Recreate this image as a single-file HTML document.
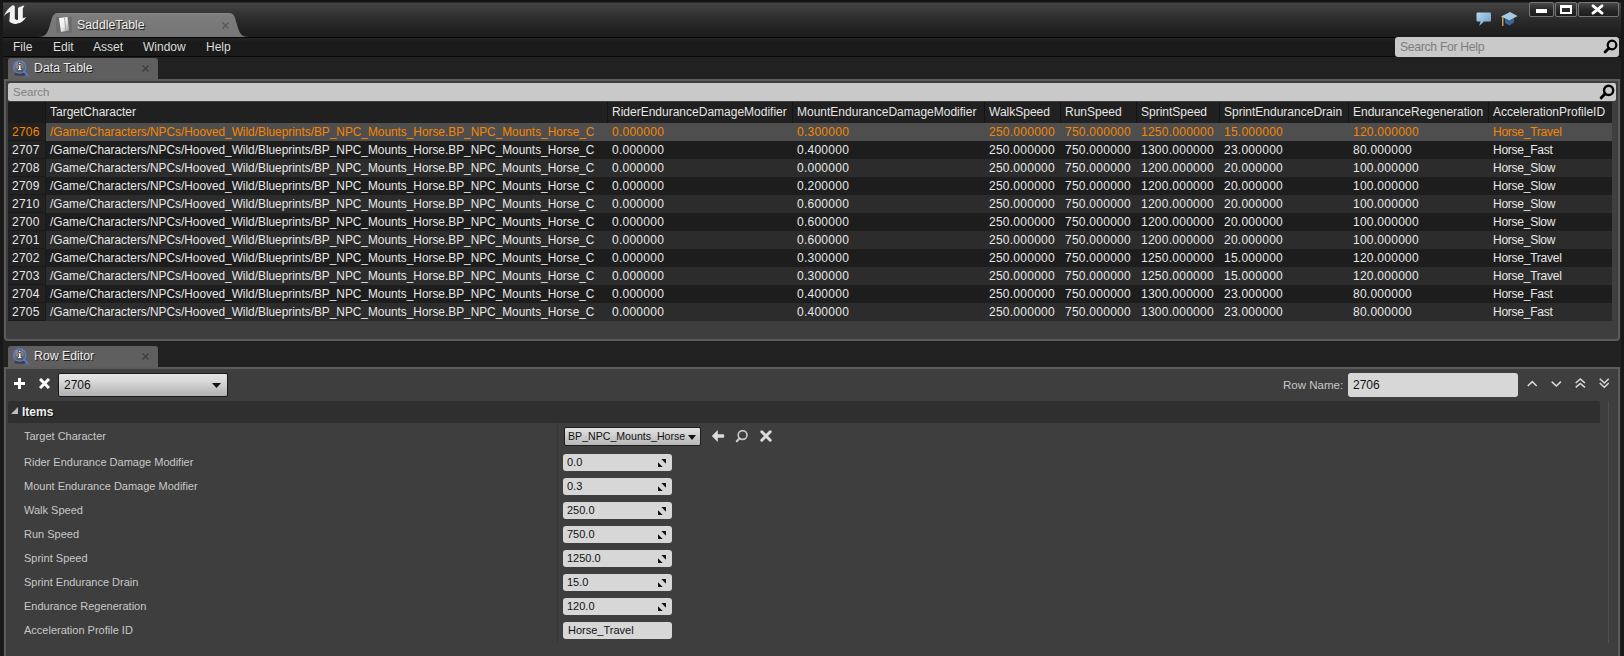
<!DOCTYPE html>
<html><head><meta charset="utf-8"><style>
*{margin:0;padding:0;box-sizing:border-box}
html,body{width:1624px;height:656px;overflow:hidden;background:#212121;font-family:"Liberation Sans",sans-serif;position:relative}
.a{position:absolute}
#title{left:3px;top:0;width:1618px;height:37px;background:linear-gradient(180deg,#131313 0,#131313 2px,#444 3px,#3c3c3c 8px,#303030 16px,#262626 24px,#1f1f1f 32px,#1d1d1d 37px);}
#menubar{left:3px;top:37px;width:1618px;height:20px;background:linear-gradient(#222 1px,#1b1b1b 4px,#1a1a1a);border-top:1px solid #050505;border-bottom:1px solid #080808}
.menu{top:37px;height:20px;line-height:20px;font-size:12px;color:#dcdcdc}
#helpbox{left:1395px;top:37px;width:224px;height:20px;background:#c9c9c9;border-radius:3px;}
#helpbox span{position:absolute;left:5px;top:0;line-height:20px;font-size:12.2px;letter-spacing:-0.3px;color:#7e7e7e}
.hmag{position:absolute;right:1px;top:2px;width:15px;height:15px}
.smag{position:absolute;right:1px;top:1px;width:16px;height:16px}
.tabdock{height:22px;background:#5f5f5f;border-radius:3px 3px 0 0;}
.tabdock span{position:absolute;left:26px;top:0;line-height:21px;font-size:12.3px;color:#ececec;text-shadow:1px 1px 0 #202020}
.tabdock .x{position:absolute;left:133px;top:0;line-height:21px;font-size:11px;color:#3a3a3a}
#dtpanel{left:4px;top:79px;width:1616px;height:262px;background:#3e3e3e;border:2px solid #5c5c5c;border-radius:0 0 4px 4px}
#search{left:8px;top:83px;width:1608px;height:18px;background:#c9c9c9;border-radius:2px}
#search span{position:absolute;left:5px;top:0;line-height:18px;font-size:11.5px;color:#808080}
#thead{left:8px;top:102px;width:1604px;height:21px;background:#202020}
.rnh{left:8px;top:102px;width:38px;height:21px;background:#1c1c1c}
.hsep{top:102px;width:1px;height:21px;background:#141414}
.htxt{top:102px;height:20px;line-height:20px;font-size:12px;color:#e6e6e6;white-space:nowrap}
.rowbg{left:46px;width:1566px;height:18px}
.rowbg.sel{background:#4e4e4e}
.rowbg.odd{background:#1d1d1d}
.rowbg.even{background:#2c2c2c}
.rn{left:8px;width:38px;height:18px;background:#222;border-bottom:1px solid #1a1a1a;border-right:1px solid #1a1a1a}
.rtxt{height:18px;line-height:18px;font-size:12px;white-space:nowrap}
.rtxt.w{color:#e8e8e8}
.rtxt.o{color:#f78500}
#tscroll{left:1612px;top:102px;width:4px;height:219px;background:#3f3f3f}
#rowed{left:4px;top:367px;width:1616px;height:300px;background:#3e3e3e;border:2px solid #5c5c5c;border-radius:0}
.plabel{left:24px;height:16px;line-height:16px;font-size:11px;color:#c8c8c8;white-space:nowrap}
.numbox{left:563px;width:109px;height:17px;background:#d7d7d7;border-radius:3px}
.numbox span{position:absolute;left:4px;top:0;line-height:17px;font-size:11px;color:#111}
.spin{position:absolute;left:95px;top:5px;width:8px;height:8px}
#propsep{left:557px;top:423px;width:1px;height:220px;background:#363636}
#pscroll{left:1608px;top:401px;width:1px;height:242px;background:#4f4f4f}
#itemshdr{left:8px;top:401px;width:1592px;height:22px;background:#2f2f2f;border-radius:3px 3px 0 0}
.path{font-size:11.85px}
.num{letter-spacing:0.25px}
.nm{letter-spacing:-0.25px}
#lborder{left:0;top:0;width:3px;height:656px;background:#181818}
#rborder{left:1621px;top:0;width:3px;height:656px;background:#181818}

</style></head><body>
<div id="title" class="a"></div>
<div class="a" style="left:38px;top:13px;width:211px;height:24px">
<svg width="211" height="24" viewBox="0 0 211 24" style="position:absolute;left:0;top:0"><defs><linearGradient id="tg" x1="0" y1="0" x2="0" y2="1"><stop offset="0" stop-color="#868686"/><stop offset="0.1" stop-color="#7c7c7c"/><stop offset="1" stop-color="#767676"/></linearGradient></defs><path d="M0 24 C7 24 9 21 11 15 L14 5 C15 1.5 17 0 20 0 L191 0 C194 0 196 1.5 197 5 L200 15 C202 21 204 24 211 24 Z" fill="url(#tg)"/></svg>
<div class="a" style="left:18px;top:4px;width:16px;height:16px;background:#6c6c6c"></div>
<svg class="a" style="left:18px;top:4px" width="16" height="16" viewBox="0 0 16 16"><defs><linearGradient id="pg" x1="0" y1="0" x2="1" y2="1"><stop offset="0" stop-color="#fff"/><stop offset="0.5" stop-color="#eee"/><stop offset="1" stop-color="#999"/></linearGradient></defs><path d="M3 1L11.5 0L13 13.5L5 15Z" fill="url(#pg)"/><path d="M8.5 0.4L10 14" stroke="#aaa" stroke-width="1"/></svg>
<div class="a" style="left:39px;top:0;line-height:24px;font-size:12.3px;color:#eee;text-shadow:1px 1px 1px #111">SaddleTable</div>
<svg class="a" style="left:184px;top:9px" width="7" height="7" viewBox="0 0 7 7"><path d="M0.5 0.5L6.5 6.5M6.5 0.5L0.5 6.5" stroke="#555" stroke-width="1.1"/></svg>
</div>
<svg class="a" style="left:0;top:0" width="30" height="28" viewBox="0 0 30 28"><path d="M3.7 16.3 C6 11 9 7 13.2 4.9 L14.8 6.5 L14.8 18.5 C15.5 20 17 20.2 18 19.5 L18 8 C20 6.5 22 5.8 24.4 5.4 L22.8 8.5 L22.8 18 C24 18 25 17.6 26.3 17.1 C24.5 20 22 22.5 19.5 23 C18 23.3 16.5 24 15.2 24 C13 23.8 11 22.8 9.3 21.5 L10 12 C8 12.5 5.5 14 3.7 16.3 Z" fill="#f2f2f2"/></svg>
<div class="a" style="left:1529px;top:2px;width:25px;height:15px;border:1px solid #777;border-radius:2px;background:linear-gradient(#484848,#2a2a2a 50%,#1c1c1c)"></div>
<div class="a" style="left:1555px;top:2px;width:22px;height:15px;border:1px solid #777;border-radius:2px;background:linear-gradient(#484848,#2a2a2a 50%,#1c1c1c)"></div>
<div class="a" style="left:1578px;top:2px;width:41px;height:15px;border:1px solid #777;border-radius:2px;background:linear-gradient(#484848,#2a2a2a 50%,#1c1c1c)"></div>
<div class="a" style="left:1536px;top:9px;width:11px;height:4px;background:#fff"></div>
<div class="a" style="left:1560px;top:5px;width:12px;height:9px;border:2px solid #fff;border-top-width:3px"></div>
<svg class="a" style="left:1591px;top:4px" width="13" height="11" viewBox="0 0 13 11"><path d="M2 1.8L11 9.2M11 1.8L2 9.2" stroke="#fff" stroke-width="2.8" stroke-linecap="round"/></svg>
<svg class="a" style="left:1476px;top:12px" width="16" height="15" viewBox="0 0 16 15"><defs><linearGradient id="cb" x1="0" y1="0" x2="1" y2="1"><stop offset="0" stop-color="#b8d8f0"/><stop offset="1" stop-color="#6a9cc8"/></linearGradient></defs><path d="M2 0.5H13.5C14.5 0.5 15 1.2 15 2.2V8C15 9 14.5 9.5 13.5 9.5H8L3.2 14L4.5 9.5H2C1 9.5 0.5 9 0.5 8V2C0.5 1 1 0.5 2 0.5Z" fill="url(#cb)"/></svg>
<svg class="a" style="left:1501px;top:12px" width="17" height="15" viewBox="0 0 17 15"><path d="M4 6.5V11L8.5 13.5L13 10.5V6.5L8.5 8.5Z" fill="#3a6694"/><path d="M0 4.5L9 0L16.5 4L8.5 8.5Z" fill="#a8c8e8"/><path d="M1.8 5V14" stroke="#e8b860" stroke-width="1.2"/></svg>

<div id="menubar" class="a"></div>
<div class="a menu" style="left:13px">File</div>
<div class="a menu" style="left:53px">Edit</div>
<div class="a menu" style="left:93px">Asset</div>
<div class="a menu" style="left:143px">Window</div>
<div class="a menu" style="left:206px">Help</div>
<div id="helpbox" class="a"><span>Search For Help</span><svg class="hmag" viewBox="0 0 16 16"><circle cx="9.6" cy="6.4" r="4.6" fill="none" stroke="#000" stroke-width="2.4"/><path d="M6.2 9.8 L2.2 13.8" stroke="#000" stroke-width="3" stroke-linecap="round"/></svg>
</div>
<div class="a tabdock" style="left:8px;top:58px;width:150px"><svg class="a" style="left:4px;top:1px" width="20" height="20" viewBox="0 0 20 20"><defs><radialGradient id="ig" cx="0.45" cy="0.35" r="0.65"><stop offset="0" stop-color="#a8a8a8"/><stop offset="1" stop-color="#4a4a4a"/></radialGradient></defs><ellipse cx="8" cy="15.2" rx="5.5" ry="1.6" fill="#222" opacity="0.55"/><circle cx="7.7" cy="8" r="6.1" fill="url(#ig)" stroke="#5a80e0" stroke-width="1.2"/><path d="M11.8 12.3L16 16.6" stroke="#4f78dc" stroke-width="1.9" stroke-linecap="round"/><path d="M6.5 3.4H8.9V5.4H6.5Z M5.8 6H8.9V9.8H9.8V11.5H5.6V9.8H6.5V7.2H5.8Z" fill="#f6f6f6" stroke="#111" stroke-width="0.5"/></svg><span>Data Table</span><svg class="a" style="left:134px;top:7px" width="7" height="7" viewBox="0 0 7 7"><path d="M0.5 0.5L6.5 6.5M6.5 0.5L0.5 6.5" stroke="#3c3c3c" stroke-width="1.1"/></svg></div>

<div id="dtpanel" class="a"></div>
<div id="search" class="a"><span>Search</span><svg class="smag" viewBox="0 0 16 16"><circle cx="9.6" cy="6.4" r="4.6" fill="none" stroke="#000" stroke-width="2.4"/><path d="M6.2 9.8 L2.2 13.8" stroke="#000" stroke-width="3" stroke-linecap="round"/></svg>
</div>
<div class="a" id="thead"></div>
<div class="a rnh"></div>
<div class="a hsep" style="left:45px"></div>
<div class="a htxt" style="left:50px">TargetCharacter</div>
<div class="a hsep" style="left:607px"></div>
<div class="a htxt" style="left:612px">RiderEnduranceDamageModifier</div>
<div class="a hsep" style="left:792px"></div>
<div class="a htxt" style="left:797px">MountEnduranceDamageModifier</div>
<div class="a hsep" style="left:984px"></div>
<div class="a htxt" style="left:989px">WalkSpeed</div>
<div class="a hsep" style="left:1060px"></div>
<div class="a htxt" style="left:1065px">RunSpeed</div>
<div class="a hsep" style="left:1136px"></div>
<div class="a htxt" style="left:1141px">SprintSpeed</div>
<div class="a hsep" style="left:1219px"></div>
<div class="a htxt" style="left:1224px">SprintEnduranceDrain</div>
<div class="a hsep" style="left:1348px"></div>
<div class="a htxt" style="left:1353px">EnduranceRegeneration</div>
<div class="a hsep" style="left:1488px"></div>
<div class="a htxt" style="left:1493px">AccelerationProfileID</div>
<div class="a rowbg sel" style="top:123px"></div>
<div class="a rn" style="top:123px"></div>
<div class="a rtxt o num" style="top:123px;left:12px">2706</div>
<div class="a rtxt o path" style="top:123px;left:50px">/Game/Characters/NPCs/Hooved_Wild/Blueprints/BP_NPC_Mounts_Horse.BP_NPC_Mounts_Horse_C</div>
<div class="a rtxt o num" style="top:123px;left:612px">0.000000</div>
<div class="a rtxt o num" style="top:123px;left:797px">0.300000</div>
<div class="a rtxt o num" style="top:123px;left:989px">250.000000</div>
<div class="a rtxt o num" style="top:123px;left:1065px">750.000000</div>
<div class="a rtxt o num" style="top:123px;left:1141px">1250.000000</div>
<div class="a rtxt o num" style="top:123px;left:1224px">15.000000</div>
<div class="a rtxt o num" style="top:123px;left:1353px">120.000000</div>
<div class="a rtxt o nm" style="top:123px;left:1493px">Horse_Travel</div>
<div class="a rowbg odd" style="top:141px"></div>
<div class="a rn" style="top:141px"></div>
<div class="a rtxt w num" style="top:141px;left:12px">2707</div>
<div class="a rtxt w path" style="top:141px;left:50px">/Game/Characters/NPCs/Hooved_Wild/Blueprints/BP_NPC_Mounts_Horse.BP_NPC_Mounts_Horse_C</div>
<div class="a rtxt w num" style="top:141px;left:612px">0.000000</div>
<div class="a rtxt w num" style="top:141px;left:797px">0.400000</div>
<div class="a rtxt w num" style="top:141px;left:989px">250.000000</div>
<div class="a rtxt w num" style="top:141px;left:1065px">750.000000</div>
<div class="a rtxt w num" style="top:141px;left:1141px">1300.000000</div>
<div class="a rtxt w num" style="top:141px;left:1224px">23.000000</div>
<div class="a rtxt w num" style="top:141px;left:1353px">80.000000</div>
<div class="a rtxt w nm" style="top:141px;left:1493px">Horse_Fast</div>
<div class="a rowbg even" style="top:159px"></div>
<div class="a rn" style="top:159px"></div>
<div class="a rtxt w num" style="top:159px;left:12px">2708</div>
<div class="a rtxt w path" style="top:159px;left:50px">/Game/Characters/NPCs/Hooved_Wild/Blueprints/BP_NPC_Mounts_Horse.BP_NPC_Mounts_Horse_C</div>
<div class="a rtxt w num" style="top:159px;left:612px">0.000000</div>
<div class="a rtxt w num" style="top:159px;left:797px">0.000000</div>
<div class="a rtxt w num" style="top:159px;left:989px">250.000000</div>
<div class="a rtxt w num" style="top:159px;left:1065px">750.000000</div>
<div class="a rtxt w num" style="top:159px;left:1141px">1200.000000</div>
<div class="a rtxt w num" style="top:159px;left:1224px">20.000000</div>
<div class="a rtxt w num" style="top:159px;left:1353px">100.000000</div>
<div class="a rtxt w nm" style="top:159px;left:1493px">Horse_Slow</div>
<div class="a rowbg odd" style="top:177px"></div>
<div class="a rn" style="top:177px"></div>
<div class="a rtxt w num" style="top:177px;left:12px">2709</div>
<div class="a rtxt w path" style="top:177px;left:50px">/Game/Characters/NPCs/Hooved_Wild/Blueprints/BP_NPC_Mounts_Horse.BP_NPC_Mounts_Horse_C</div>
<div class="a rtxt w num" style="top:177px;left:612px">0.000000</div>
<div class="a rtxt w num" style="top:177px;left:797px">0.200000</div>
<div class="a rtxt w num" style="top:177px;left:989px">250.000000</div>
<div class="a rtxt w num" style="top:177px;left:1065px">750.000000</div>
<div class="a rtxt w num" style="top:177px;left:1141px">1200.000000</div>
<div class="a rtxt w num" style="top:177px;left:1224px">20.000000</div>
<div class="a rtxt w num" style="top:177px;left:1353px">100.000000</div>
<div class="a rtxt w nm" style="top:177px;left:1493px">Horse_Slow</div>
<div class="a rowbg even" style="top:195px"></div>
<div class="a rn" style="top:195px"></div>
<div class="a rtxt w num" style="top:195px;left:12px">2710</div>
<div class="a rtxt w path" style="top:195px;left:50px">/Game/Characters/NPCs/Hooved_Wild/Blueprints/BP_NPC_Mounts_Horse.BP_NPC_Mounts_Horse_C</div>
<div class="a rtxt w num" style="top:195px;left:612px">0.000000</div>
<div class="a rtxt w num" style="top:195px;left:797px">0.600000</div>
<div class="a rtxt w num" style="top:195px;left:989px">250.000000</div>
<div class="a rtxt w num" style="top:195px;left:1065px">750.000000</div>
<div class="a rtxt w num" style="top:195px;left:1141px">1200.000000</div>
<div class="a rtxt w num" style="top:195px;left:1224px">20.000000</div>
<div class="a rtxt w num" style="top:195px;left:1353px">100.000000</div>
<div class="a rtxt w nm" style="top:195px;left:1493px">Horse_Slow</div>
<div class="a rowbg odd" style="top:213px"></div>
<div class="a rn" style="top:213px"></div>
<div class="a rtxt w num" style="top:213px;left:12px">2700</div>
<div class="a rtxt w path" style="top:213px;left:50px">/Game/Characters/NPCs/Hooved_Wild/Blueprints/BP_NPC_Mounts_Horse.BP_NPC_Mounts_Horse_C</div>
<div class="a rtxt w num" style="top:213px;left:612px">0.000000</div>
<div class="a rtxt w num" style="top:213px;left:797px">0.600000</div>
<div class="a rtxt w num" style="top:213px;left:989px">250.000000</div>
<div class="a rtxt w num" style="top:213px;left:1065px">750.000000</div>
<div class="a rtxt w num" style="top:213px;left:1141px">1200.000000</div>
<div class="a rtxt w num" style="top:213px;left:1224px">20.000000</div>
<div class="a rtxt w num" style="top:213px;left:1353px">100.000000</div>
<div class="a rtxt w nm" style="top:213px;left:1493px">Horse_Slow</div>
<div class="a rowbg even" style="top:231px"></div>
<div class="a rn" style="top:231px"></div>
<div class="a rtxt w num" style="top:231px;left:12px">2701</div>
<div class="a rtxt w path" style="top:231px;left:50px">/Game/Characters/NPCs/Hooved_Wild/Blueprints/BP_NPC_Mounts_Horse.BP_NPC_Mounts_Horse_C</div>
<div class="a rtxt w num" style="top:231px;left:612px">0.000000</div>
<div class="a rtxt w num" style="top:231px;left:797px">0.600000</div>
<div class="a rtxt w num" style="top:231px;left:989px">250.000000</div>
<div class="a rtxt w num" style="top:231px;left:1065px">750.000000</div>
<div class="a rtxt w num" style="top:231px;left:1141px">1200.000000</div>
<div class="a rtxt w num" style="top:231px;left:1224px">20.000000</div>
<div class="a rtxt w num" style="top:231px;left:1353px">100.000000</div>
<div class="a rtxt w nm" style="top:231px;left:1493px">Horse_Slow</div>
<div class="a rowbg odd" style="top:249px"></div>
<div class="a rn" style="top:249px"></div>
<div class="a rtxt w num" style="top:249px;left:12px">2702</div>
<div class="a rtxt w path" style="top:249px;left:50px">/Game/Characters/NPCs/Hooved_Wild/Blueprints/BP_NPC_Mounts_Horse.BP_NPC_Mounts_Horse_C</div>
<div class="a rtxt w num" style="top:249px;left:612px">0.000000</div>
<div class="a rtxt w num" style="top:249px;left:797px">0.300000</div>
<div class="a rtxt w num" style="top:249px;left:989px">250.000000</div>
<div class="a rtxt w num" style="top:249px;left:1065px">750.000000</div>
<div class="a rtxt w num" style="top:249px;left:1141px">1250.000000</div>
<div class="a rtxt w num" style="top:249px;left:1224px">15.000000</div>
<div class="a rtxt w num" style="top:249px;left:1353px">120.000000</div>
<div class="a rtxt w nm" style="top:249px;left:1493px">Horse_Travel</div>
<div class="a rowbg even" style="top:267px"></div>
<div class="a rn" style="top:267px"></div>
<div class="a rtxt w num" style="top:267px;left:12px">2703</div>
<div class="a rtxt w path" style="top:267px;left:50px">/Game/Characters/NPCs/Hooved_Wild/Blueprints/BP_NPC_Mounts_Horse.BP_NPC_Mounts_Horse_C</div>
<div class="a rtxt w num" style="top:267px;left:612px">0.000000</div>
<div class="a rtxt w num" style="top:267px;left:797px">0.300000</div>
<div class="a rtxt w num" style="top:267px;left:989px">250.000000</div>
<div class="a rtxt w num" style="top:267px;left:1065px">750.000000</div>
<div class="a rtxt w num" style="top:267px;left:1141px">1250.000000</div>
<div class="a rtxt w num" style="top:267px;left:1224px">15.000000</div>
<div class="a rtxt w num" style="top:267px;left:1353px">120.000000</div>
<div class="a rtxt w nm" style="top:267px;left:1493px">Horse_Travel</div>
<div class="a rowbg odd" style="top:285px"></div>
<div class="a rn" style="top:285px"></div>
<div class="a rtxt w num" style="top:285px;left:12px">2704</div>
<div class="a rtxt w path" style="top:285px;left:50px">/Game/Characters/NPCs/Hooved_Wild/Blueprints/BP_NPC_Mounts_Horse.BP_NPC_Mounts_Horse_C</div>
<div class="a rtxt w num" style="top:285px;left:612px">0.000000</div>
<div class="a rtxt w num" style="top:285px;left:797px">0.400000</div>
<div class="a rtxt w num" style="top:285px;left:989px">250.000000</div>
<div class="a rtxt w num" style="top:285px;left:1065px">750.000000</div>
<div class="a rtxt w num" style="top:285px;left:1141px">1300.000000</div>
<div class="a rtxt w num" style="top:285px;left:1224px">23.000000</div>
<div class="a rtxt w num" style="top:285px;left:1353px">80.000000</div>
<div class="a rtxt w nm" style="top:285px;left:1493px">Horse_Fast</div>
<div class="a rowbg even" style="top:303px"></div>
<div class="a rn" style="top:303px"></div>
<div class="a rtxt w num" style="top:303px;left:12px">2705</div>
<div class="a rtxt w path" style="top:303px;left:50px">/Game/Characters/NPCs/Hooved_Wild/Blueprints/BP_NPC_Mounts_Horse.BP_NPC_Mounts_Horse_C</div>
<div class="a rtxt w num" style="top:303px;left:612px">0.000000</div>
<div class="a rtxt w num" style="top:303px;left:797px">0.400000</div>
<div class="a rtxt w num" style="top:303px;left:989px">250.000000</div>
<div class="a rtxt w num" style="top:303px;left:1065px">750.000000</div>
<div class="a rtxt w num" style="top:303px;left:1141px">1300.000000</div>
<div class="a rtxt w num" style="top:303px;left:1224px">23.000000</div>
<div class="a rtxt w num" style="top:303px;left:1353px">80.000000</div>
<div class="a rtxt w nm" style="top:303px;left:1493px">Horse_Fast</div>
<div class="a" id="tscroll"></div>
<div class="a tabdock" style="left:8px;top:346px;width:150px"><svg class="a" style="left:4px;top:1px" width="20" height="20" viewBox="0 0 20 20"><defs><radialGradient id="ig2" cx="0.45" cy="0.35" r="0.65"><stop offset="0" stop-color="#a8a8a8"/><stop offset="1" stop-color="#4a4a4a"/></radialGradient></defs><ellipse cx="8" cy="15.2" rx="5.5" ry="1.6" fill="#222" opacity="0.55"/><circle cx="7.7" cy="8" r="6.1" fill="url(#ig2)" stroke="#5a80e0" stroke-width="1.2"/><path d="M11.8 12.3L16 16.6" stroke="#4f78dc" stroke-width="1.9" stroke-linecap="round"/><path d="M6.5 3.4H8.9V5.4H6.5Z M5.8 6H8.9V9.8H9.8V11.5H5.6V9.8H6.5V7.2H5.8Z" fill="#f6f6f6" stroke="#111" stroke-width="0.5"/></svg><span>Row Editor</span><svg class="a" style="left:134px;top:7px" width="7" height="7" viewBox="0 0 7 7"><path d="M0.5 0.5L6.5 6.5M6.5 0.5L0.5 6.5" stroke="#3c3c3c" stroke-width="1.1"/></svg></div>

<div id="rowed" class="a"></div>
<svg class="a" style="left:14px;top:378px" width="11" height="11" viewBox="0 0 11 11"><path d="M5.5 0V11M0 5.5H11" stroke="#fff" stroke-width="3"/></svg>
<svg class="a" style="left:39px;top:378px" width="11" height="11" viewBox="0 0 11 11"><path d="M1 1L10 10M10 1L1 10" stroke="#fff" stroke-width="3"/></svg>
<div class="a" style="left:58px;top:373px;width:170px;height:24px;background:linear-gradient(#e4e4e4,#dadada 30%,#b0b0b0);border:1px solid #1a1a1a;border-radius:2px"><span style="position:absolute;left:5px;top:0;line-height:22px;font-size:12px;color:#111">2706</span><svg style="position:absolute;left:153px;top:9px" width="9" height="5" viewBox="0 0 9 5"><path d="M0 0H9L4.5 5Z" fill="#111"/></svg></div>
<div class="a" style="left:1283px;top:374px;line-height:22px;font-size:11.5px;color:#c8c8c8">Row Name:</div>
<div class="a" style="left:1348px;top:373px;width:170px;height:24px;background:#d7d7d7;border-radius:3px"><span style="position:absolute;left:5px;top:0;line-height:24px;font-size:12px;color:#111">2706</span></div>
<svg class="a" style="left:1520px;top:370px" width="100" height="30" viewBox="0 0 100 30"><path d="M7.7 16L12.3 11.6L16.7 16M31.7 11.6L36.3 16L40.9 11.6M55.7 13L60.3 9L64.9 13M55.7 17.4L60.3 13.4L64.9 17.4M79.7 8.8L84.4 13L88.7 8.8M79.7 13L84.4 17.2L88.7 13" fill="none" stroke="#dadada" stroke-width="1.5"/></svg>
<div class="a" id="itemshdr"></div>
<svg class="a" style="left:11px;top:407px" width="7" height="7" viewBox="0 0 7 7"><path d="M7 0V7H0Z" fill="#bbb"/></svg>
<div class="a" style="left:22px;top:402px;line-height:20px;font-size:12px;font-weight:bold;color:#eee;text-shadow:1px 1px 0 #111">Items</div>

<div class="a plabel" style="top:428px">Target Character</div>
<div class="a" style="left:564px;top:427px;width:137px;height:19px;background:linear-gradient(#e2e2e2,#b6b6b6);border:1px solid #1e1e1e;border-radius:2px"><span style="position:absolute;left:3px;top:0;line-height:17px;font-size:10.6px;color:#111;white-space:nowrap">BP_NPC_Mounts_Horse</span><svg style="position:absolute;left:123px;top:7px" width="8" height="5" viewBox="0 0 8 5"><path d="M0 0H8L4 5Z" fill="#111"/></svg></div>
<svg class="a" style="left:711px;top:429px" width="14" height="14" viewBox="0 0 14 14"><path d="M0.8 7L6.8 1V5.2H12.2C13 5.2 13.2 5.8 13.2 7C13.2 8.2 13 8.8 12.2 8.8H6.8V13Z" fill="#dcdcdc"/></svg>
<svg class="a" style="left:735px;top:429px" width="14" height="14" viewBox="0 0 14 14"><circle cx="7.6" cy="6" r="4.4" fill="none" stroke="#c8c8c8" stroke-width="1.6"/><path d="M4.6 9.2L1.8 12.2" stroke="#c8c8c8" stroke-width="2.2" stroke-linecap="round"/></svg>
<svg class="a" style="left:760px;top:430px" width="12" height="12" viewBox="0 0 12 12"><path d="M1.8 1.8L10.2 10.2M10.2 1.8L1.8 10.2" stroke="#dcdcdc" stroke-width="3" stroke-linecap="round"/></svg>

<div class="a plabel" style="top:454px">Rider Endurance Damage Modifier</div>
<div class="a numbox" style="top:454px"><span>0.0</span><svg class="spin" viewBox="0 0 8 8"><path d="M3.3 0H8V4.7Z" fill="#111"/><path d="M0 3.3V8H4.7Z" fill="#111"/></svg>
</div>
<div class="a plabel" style="top:478px">Mount Endurance Damage Modifier</div>
<div class="a numbox" style="top:478px"><span>0.3</span><svg class="spin" viewBox="0 0 8 8"><path d="M3.3 0H8V4.7Z" fill="#111"/><path d="M0 3.3V8H4.7Z" fill="#111"/></svg>
</div>
<div class="a plabel" style="top:502px">Walk Speed</div>
<div class="a numbox" style="top:502px"><span>250.0</span><svg class="spin" viewBox="0 0 8 8"><path d="M3.3 0H8V4.7Z" fill="#111"/><path d="M0 3.3V8H4.7Z" fill="#111"/></svg>
</div>
<div class="a plabel" style="top:526px">Run Speed</div>
<div class="a numbox" style="top:526px"><span>750.0</span><svg class="spin" viewBox="0 0 8 8"><path d="M3.3 0H8V4.7Z" fill="#111"/><path d="M0 3.3V8H4.7Z" fill="#111"/></svg>
</div>
<div class="a plabel" style="top:550px">Sprint Speed</div>
<div class="a numbox" style="top:550px"><span>1250.0</span><svg class="spin" viewBox="0 0 8 8"><path d="M3.3 0H8V4.7Z" fill="#111"/><path d="M0 3.3V8H4.7Z" fill="#111"/></svg>
</div>
<div class="a plabel" style="top:574px">Sprint Endurance Drain</div>
<div class="a numbox" style="top:574px"><span>15.0</span><svg class="spin" viewBox="0 0 8 8"><path d="M3.3 0H8V4.7Z" fill="#111"/><path d="M0 3.3V8H4.7Z" fill="#111"/></svg>
</div>
<div class="a plabel" style="top:598px">Endurance Regeneration</div>
<div class="a numbox" style="top:598px"><span>120.0</span><svg class="spin" viewBox="0 0 8 8"><path d="M3.3 0H8V4.7Z" fill="#111"/><path d="M0 3.3V8H4.7Z" fill="#111"/></svg>
</div>
<div class="a plabel" style="top:622px">Acceleration Profile ID</div>
<div class="a numbox" style="top:622px"><span style="left:5px">Horse_Travel</span></div>
<div class="a" id="propsep"></div>
<div class="a" id="pscroll"></div>
<div class="a" id="lborder"></div><div class="a" id="rborder"></div>
</body></html>
